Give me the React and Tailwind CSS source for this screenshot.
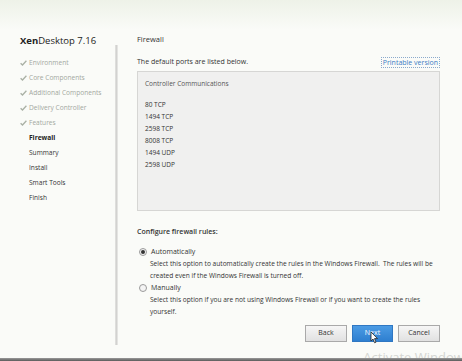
import React from "react";

const steps = [
  { label: "Environment", done: true },
  { label: "Core Components", done: true },
  { label: "Additional Components", done: true },
  { label: "Delivery Controller", done: true },
  { label: "Features", done: true },
  { label: "Firewall", current: true },
  { label: "Summary" },
  { label: "Install" },
  { label: "Smart Tools" },
  { label: "Finish" },
];

const ports = ["80 TCP", "1494 TCP", "2598 TCP", "8008 TCP", "1494 UDP", "2598 UDP"];

function Check() {
  return (
    <svg width="7" height="6" viewBox="0 0 7 6" className="shrink-0">
      <path d="M0.6 3.2 L2.5 5 L6.4 0.8" fill="none" stroke="#a9b0a4" strokeWidth="1.3" />
    </svg>
  );
}

function Radio({ checked }) {
  return (
    <span className="w-[8px] h-[8px] rounded-full border border-[#9a9a9a] bg-[#f4f4f4] flex items-center justify-center shrink-0">
      {checked && <span className="w-[4px] h-[4px] rounded-full bg-[#333]" />}
    </span>
  );
}

export default function App() {
  return (
    <div
      className="relative w-[462px] h-[361px] overflow-hidden flex bg-[#fafbf8] text-[#333]"
      style={{ fontFamily: '"Open Sans", "Noto Sans", sans-serif' }}
    >
      <div className="absolute inset-x-0 top-0 h-[30px] bg-gradient-to-b from-[#eef2e8] to-[#fafbf8]" />

      {/* Sidebar */}
      <div className="relative w-[115px] shrink-0 pl-[20px] pt-[34px]">
        <div className="text-[9.5px] leading-[14px] text-[#222]">
          <span className="font-bold">Xen</span>Desktop 7.16
        </div>
        <div className="mt-[7px] flex flex-col">
          {steps.map((s) => (
            <div key={s.label} className="h-[15px] flex items-center gap-[2px] text-[6.6px]">
              {s.done ? <Check /> : <span className="w-[7px] shrink-0" />}
              <span
                className={
                  s.done
                    ? "text-[#a3a89f]"
                    : s.current
                    ? "font-bold text-[#222]"
                    : "text-[#333]"
                }
              >
                {s.label}
              </span>
            </div>
          ))}
        </div>
      </div>

      {/* Divider */}
      <div className="relative w-[3px] mt-[45px] mb-[16px] bg-gradient-to-r from-[#e4e4e2] via-[#d2d2d0] to-[#ededeb]" />

      {/* Main */}
      <div className="relative flex-1 pl-[19px] pr-[22px] pt-[33px] text-[7px]">
        <div className="text-[7.5px] leading-[12px] text-[#333]">Firewall</div>
        <div className="mt-[11px] flex items-center justify-between h-[12px]">
          <span className="text-[7px] text-[#333]">The default ports are listed below.</span>
          <span className="text-[7px] text-[#3a7bc4] border border-dotted border-[#8aa9cc] px-[1px] leading-[9px]">
            Printable version
          </span>
        </div>
        <div className="mt-[3px] h-[140px] bg-[#f0f0ef] border border-[#d6d6d4] pl-[7px] pt-[6px]">
          <div className="text-[6.5px] leading-[12px] text-[#555]">Controller Communications</div>
          <div className="mt-[9px] flex flex-col">
            {ports.map((p) => (
              <div key={p} className="text-[6.5px] leading-[12px] text-[#333]">
                {p}
              </div>
            ))}
          </div>
        </div>

        <div className="mt-[15px] text-[7px] leading-[12px] font-semibold text-[#333]">
          Configure firewall rules:
        </div>

        <div className="mt-[8px] pl-[2px]">
          <div className="flex items-center gap-[4px] h-[12px]">
            <Radio checked />
            <span className="text-[7px]">Automatically</span>
          </div>
          <div className="pl-[11px] text-[6.6px] leading-[12px] text-[#333]">
            <div>Select this option to automatically create the rules in the Windows Firewall.&nbsp; The rules will be</div>
            <div>created even if the Windows Firewall is turned off.</div>
          </div>
          <div className="flex items-center gap-[4px] h-[12px]">
            <Radio />
            <span className="text-[7px]">Manually</span>
          </div>
          <div className="pl-[11px] text-[6.6px] leading-[12px] text-[#333]">
            <div>Select this option if you are not using Windows Firewall or if you want to create the rules</div>
            <div>yourself.</div>
          </div>
        </div>

        <div className="mt-[7px] flex justify-end gap-[5px]">
          <button className="w-[42px] h-[17px] text-[7px] text-[#333] border border-[#a9a9a9] bg-gradient-to-b from-[#f6f6f6] to-[#e1e1e1]">
            Back
          </button>
          <button className="relative w-[41px] h-[17px] text-[7px] text-white border border-[#2f77c2] bg-gradient-to-b from-[#4b9be4] to-[#2e7fd0]">
            Next
            <svg className="absolute left-[17px] top-[5px]" width="9" height="13" viewBox="0 0 9 13">
              <path d="M1 1 L1 10 L3 8 L4.6 11.8 L6 11.2 L4.5 7.6 L7.5 7.6 Z" fill="#fff" stroke="#222" strokeWidth="0.8" />
            </svg>
          </button>
          <button className="w-[42px] h-[17px] text-[7px] text-[#333] border border-[#a9a9a9] bg-gradient-to-b from-[#f6f6f6] to-[#e1e1e1]">
            Cancel
          </button>
        </div>
      </div>

      <div className="absolute right-[-8px] bottom-[-6px] text-[13px] text-[#d4d6d2]" style={{ fontFamily: '"Open Sans", sans-serif' }}>
        Activate Windows
      </div>
      <div className="absolute inset-x-0 bottom-0 h-[3px] bg-gradient-to-b from-[#9a9a9a] to-[#5a5a5a]" />
    </div>
  );
}
